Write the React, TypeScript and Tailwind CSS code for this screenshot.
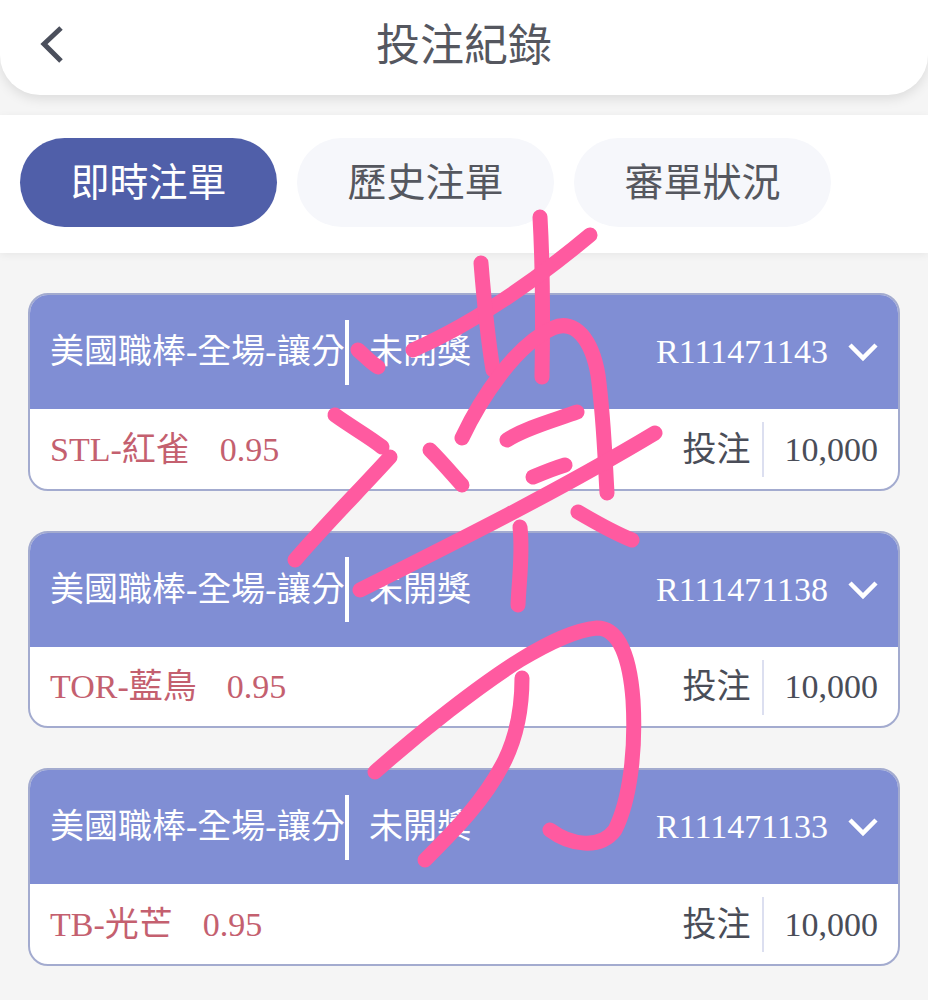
import React from "react";

const FONT = "font-['Liberation_Serif','Noto_Sans_CJK_TC',serif]";

const TABS = ["即時注單", "歷史注單", "審單狀況"];

const BETS = [
  { team: "STL-紅雀", odds: "0.95", id: "R111471143" },
  { team: "TOR-藍鳥", odds: "0.95", id: "R111471138" },
  { team: "TB-光芒", odds: "0.95", id: "R111471133" },
];

// handwritten strokes scribbled over the screenshot
const SCRIBBLES = [
  "M540 217C543 270 543 320 542 377",
  "M590 235C530 285 470 325 413 350",
  "M481 263C484 300 488 340 493 370",
  "M462 438C480 400 515 345 553 328C575 318 592 340 598 375C604 420 605 460 607 493",
  "M507 440C525 428 555 420 577 412",
  "M533 477C545 472 555 468 565 465",
  "M655 433C560 490 460 540 360 590",
  "M578 512C595 522 612 532 632 540",
  "M520 527C523 555 519 580 518 605",
  "M358 350C365 356 370 362 378 367",
  "M335 415C350 426 368 436 382 447",
  "M390 457C360 490 325 525 295 560",
  "M430 450C442 462 452 474 462 485",
  "M375 772C420 732 480 685 520 660C550 642 575 630 597 628C620 628 630 660 633 700C636 750 630 800 615 830C600 850 570 845 550 830",
  "M522 678C522 710 517 735 505 760C485 800 455 830 425 860",
];

const BetCard = ({ team, odds, id }: { team: string; odds: string; id: string }) => (
  <div className="h-[197.5px] overflow-hidden rounded-[20px] border-2 border-[#a3abcf] bg-white">
    <div className="flex h-[114px] items-center bg-[#808ed4] pl-5 pr-5 text-[34px] text-white">
      <div className="w-[295px] shrink-0 leading-[46px]">美國職棒-全場-讓分</div>
      <div className="h-[65px] w-1 shrink-0 bg-white" />
      <div className="ml-5 leading-none">未開獎</div>
      <div className="ml-auto flex items-center">
        <span className="leading-none">{id}</span>
        <svg width="30" height="20" viewBox="0 0 30 20" className="ml-5" fill="none" stroke="white" strokeWidth="4.5" aria-hidden="true">
          <polyline points="2,3 15,16 28,3" />
        </svg>
      </div>
    </div>
    <div className="flex h-[80px] items-center pl-5 pr-5 text-[34px]">
      <span className="text-[#c4606f]">{team}</span>
      <span className="ml-[30px] text-[#c4606f]">{odds}</span>
      <span className="ml-auto text-[#4a4d58]">投注</span>
      <div className="mx-[11px] mt-[1px] h-[55px] w-0.5 bg-[#dcdff0]" />
      <span className="ml-2.5 text-[#4a4d58]">10,000</span>
    </div>
  </div>
);

export default function App() {
  return (
    <div className={`relative h-[1000px] w-[928px] overflow-hidden bg-[#f5f5f5] ${FONT}`}>
      <header className="flex h-[95px] items-center rounded-b-[40px] bg-white pl-10 shadow-[0_4px_12px_rgba(0,0,0,0.1)]">
        <svg width="24" height="38" viewBox="0 0 24 38" fill="none" stroke="#4b4f5c" strokeWidth="5" className="-mt-[5px]" aria-hidden="true">
          <polyline points="21,2 4,18 21,35" />
        </svg>
        <h1 className="ml-[312px] -mt-[1px] text-[44px] font-normal leading-none text-[#55575f]">投注紀錄</h1>
      </header>

      <nav className="mt-5 flex h-[138px] items-center gap-5 bg-white pl-5 pb-[3px] shadow-[0_2px_8px_rgba(0,0,0,0.06)]">
        {TABS.map((tab, i) => (
          <button
            key={tab}
            className={
              i === 0
                ? "h-[89px] w-[257px] rounded-full bg-[#505fa9] text-[39px] leading-none text-white"
                : "h-[89px] w-[257px] rounded-full bg-[#f6f7fb] text-[39px] leading-none text-[#55575f]"
            }
          >
            {tab}
          </button>
        ))}
      </nav>

      <main className="flex flex-col gap-10 pl-7 pr-7 pt-10">
        {BETS.map((bet) => (
          <BetCard key={bet.id} {...bet} />
        ))}
      </main>

      <svg className="pointer-events-none absolute inset-0" width="928" height="1000" viewBox="0 0 928 1000" fill="none" stroke="#ff5aa0" strokeWidth="15" strokeLinecap="round" strokeLinejoin="round" aria-hidden="true">
        {SCRIBBLES.map((d) => (
          <path key={d} d={d} />
        ))}
      </svg>
    </div>
  );
}
